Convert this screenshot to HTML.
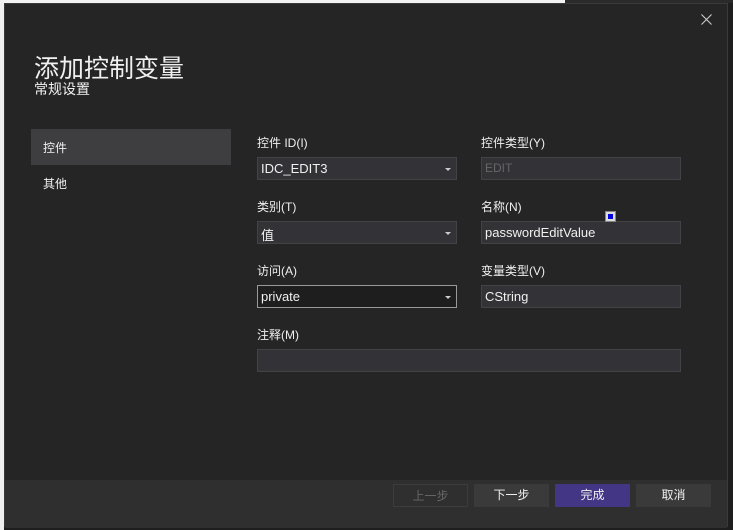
<!DOCTYPE html>
<html><head><meta charset="utf-8"><style>
*{margin:0;padding:0;box-sizing:border-box}
body{width:733px;height:530px;background:#1e1e1e;position:relative;overflow:hidden;font-family:"Liberation Sans","Noto Sans CJK SC",sans-serif;color:#f0f0f0}
.top{position:absolute;left:0;top:0;width:565px;height:3px;background:#f3f3f3}
.top2{position:absolute;left:565px;top:0;width:168px;height:3px;background:#2a2a2a}
.lstrip{position:absolute;left:0;top:0;width:4px;height:530px;background:#f0f0f0}
.dlg{position:absolute;left:4px;top:3px;width:724px;height:524px;background:#252526;border:1px solid #3a3a3a}
.foot{position:absolute;left:0;top:476px;width:100%;height:48px;background:#2f2f2f}
.abs{position:absolute}
.lbl{font-size:12px;color:#f0f0f0}
.box{position:absolute;height:23px;background:#333337;border:1px solid #434346;font-size:13px;padding:3px 3px;color:#f0f0f0}
.arr{position:absolute;right:5px;top:10px;width:0;height:0;border-left:3px solid transparent;border-right:3px solid transparent;border-top:3px solid #ccc}
.btn{position:absolute;top:484px;width:75px;height:23px;background:#3a3a3a;font-size:12px;text-align:center;line-height:23px;color:#f0f0f0}
</style></head><body>
<div class="top"></div><div class="top2"></div><div class="lstrip"></div>
<div class="dlg">
<div class="foot"></div>
</div>
<svg class="abs" style="left:701px;top:14px" width="11" height="11" viewBox="0 0 11 11"><path d="M0.5 0.5L10.5 10.5M10.5 0.5L0.5 10.5" stroke="#ccc" stroke-width="1.1"/></svg>
<div class="abs" style="left:34px;top:49px;font-size:25px;color:#f0f0f0">添加控制变量</div>
<div class="abs" style="left:34px;top:79px;font-size:14px">常规设置</div>
<div class="abs" style="left:31px;top:129px;width:200px;height:36px;background:#3e3e40"></div>
<div class="abs lbl" style="left:43px;top:139px">控件</div>
<div class="abs lbl" style="left:43px;top:175px">其他</div>

<div class="abs lbl" style="left:257px;top:134px">控件 ID(I)</div>
<div class="box" style="left:257px;top:157px;width:200px">IDC_EDIT3<div class="arr"></div></div>
<div class="abs lbl" style="left:481px;top:134px">控件类型(Y)</div>
<div class="box" style="left:481px;top:157px;width:200px;color:#666;font-size:12px">EDIT</div>

<div class="abs lbl" style="left:257px;top:198px">类别(T)</div>
<div class="box" style="left:257px;top:221px;width:200px">值<div class="arr"></div></div>
<div class="abs lbl" style="left:481px;top:198px">名称(N)</div>
<div class="box" style="left:481px;top:221px;width:200px">passwordEditValue</div>
<div class="abs" style="left:605px;top:211px;width:11px;height:11px;background:#ddd;border:1px solid #888"><div style="margin:2px;width:5px;height:5px;background:#0000e0"></div></div>

<div class="abs lbl" style="left:257px;top:262px">访问(A)</div>
<div class="box" style="left:257px;top:285px;width:200px;background:#1e1e1e;border-color:#999">private<div class="arr"></div></div>
<div class="abs lbl" style="left:481px;top:262px">变量类型(V)</div>
<div class="box" style="left:481px;top:285px;width:200px">CString</div>

<div class="abs lbl" style="left:257px;top:326px">注释(M)</div>
<div class="box" style="left:257px;top:349px;width:424px"></div>

<div class="btn" style="left:393px;background:#2f2f2f;border:1px solid #3c3c3c;color:#666">上一步</div>
<div class="btn" style="left:474px">下一步</div>
<div class="btn" style="left:555px;background:#433684">完成</div>
<div class="btn" style="left:636px">取消</div>
</body></html>
